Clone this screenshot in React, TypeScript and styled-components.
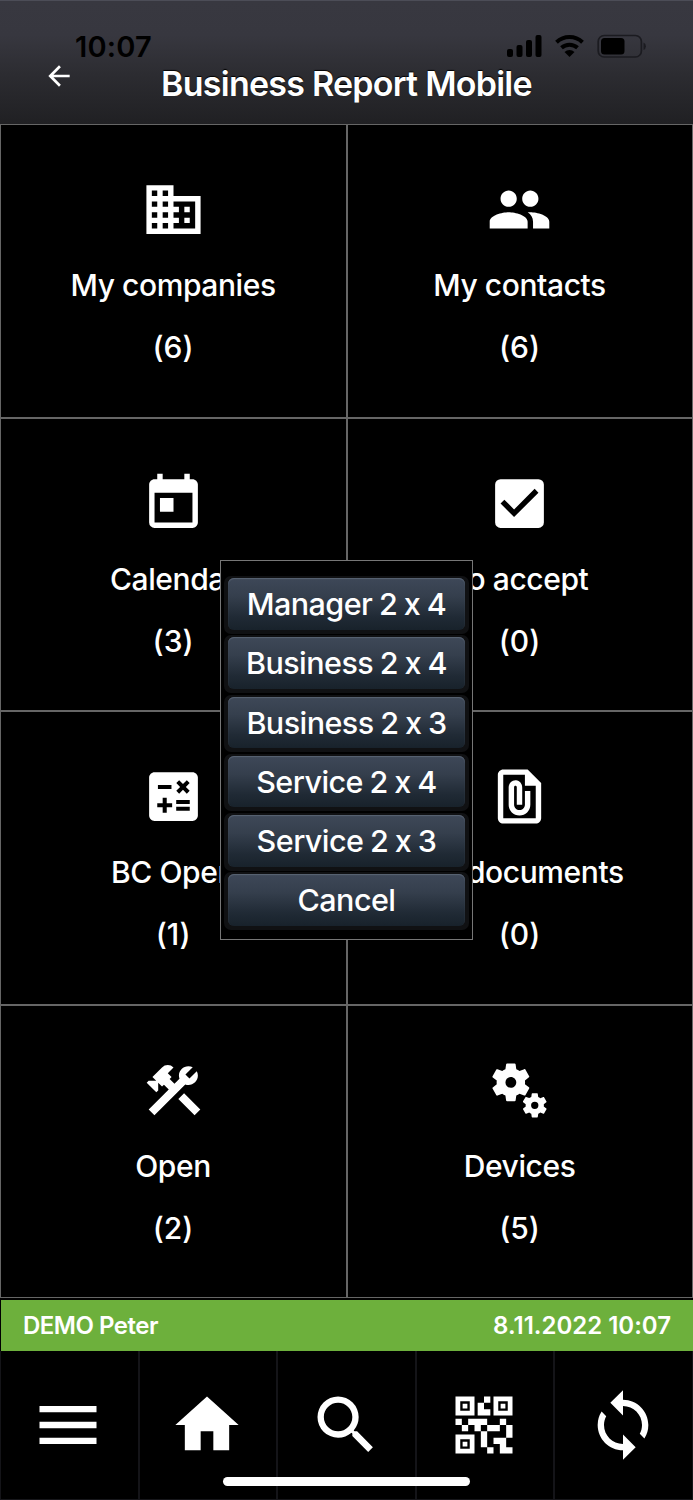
import React from "react";
import styled, { createGlobalStyle } from "styled-components";
import type { IconType } from "react-icons";
import {
  MdDomain,
  MdPeople,
  MdToday,
  MdCheckBox,
  MdCalculate,
  MdFilePresent,
  MdConstruction,
  MdMiscellaneousServices,
  MdMenu,
  MdHome,
  MdSearch,
  MdQrCode2,
  MdSync,
  MdArrowBack,
} from "react-icons/md";

const GlobalStyle = createGlobalStyle`
  * { box-sizing: border-box; }
  body { margin: 0; background: #000; }
  button { font: inherit; color: inherit; border: 0; background: none; padding: 0; }
`;

const Screen = styled.main`
  position: relative;
  display: flex;
  flex-direction: column;
  width: 693px;
  height: 1500px;
  overflow: hidden;
  background: #000;
  color: #fff;
  font-family: Inter, "Liberation Sans", sans-serif;
  font-feature-settings: "calt" 0;
`;

const Header = styled.header`
  flex: none;
  height: 124px;
  border-top: 1px solid #4c4d57;
  background: linear-gradient(#383840 0%, #37373f 28%, #2c2c31 60%, #202023 100%);
`;

const StatusBar = styled.div`
  display: flex;
  justify-content: space-between;
  align-items: center;
  height: 28px;
  margin-top: 31px;
  padding: 0 46px 0 75px;
  color: #000;
`;

const Clock = styled.span`
  padding-top: 1px;
  font-size: 29px;
  font-weight: 600;
  line-height: 28px;
  letter-spacing: 0.2px;
`;

const TitleRow = styled.div`
  display: grid;
  grid-template-columns: 118px 1fr 118px;
  height: 50px;
`;

const BackButton = styled.button`
  display: flex;
  justify-content: center;
  height: 32px;
`;

const Title = styled.h1`
  margin: 0;
  font-size: 34px;
  font-weight: 600;
  line-height: 48px;
  letter-spacing: -0.75px;
  text-align: center;
  white-space: nowrap;
  text-shadow: 0 -1px 1px #000;
`;

const TileGrid = styled.section`
  flex: none;
  display: grid;
  grid-template-columns: 1fr 1fr;
  grid-template-rows: repeat(4, 1fr);
  height: 1174px;
`;

const Tile = styled.div`
  display: flex;
  flex-direction: column;
  align-items: center;
  padding: 52px 0.4px 0 0;
  border: 1px solid #666;
`;

const TileText = styled.span`
  font-size: 30px;
  font-weight: 500;
  line-height: 62px;
  white-space: nowrap;
`;

const TileLabel = styled(TileText)`
  margin-top: 12px;
  letter-spacing: -0.42px;
`;

const InfoBar = styled.div`
  flex: none;
  display: flex;
  justify-content: space-between;
  height: 51px;
  margin: 2px 0 0 1px;
  padding: 0 22px;
  background: #6db03c;
  font-size: 24px;
  font-weight: 600;
  line-height: 52px;
`;

const UserName = styled.span`
  letter-spacing: -0.5px;
`;

const Timestamp = styled.span`
  letter-spacing: 0;
`;

const NavBar = styled.nav`
  display: grid;
  grid-template-columns: repeat(5, 1fr);
  height: 149px;
  border-bottom: 1px solid #17171b;
`;

const NavItem = styled.button`
  display: flex;
  justify-content: center;
  padding: 36px 1.8px 0 0;
  border: solid #141418;
  border-width: 0 1px;
`;

const HomeIndicator = styled.div`
  position: absolute;
  left: 223px;
  bottom: 14px;
  width: 247px;
  height: 9px;
  border-radius: 5px;
  background: #fff;
`;

const Dialog = styled.div`
  position: absolute;
  top: 560px;
  left: 220px;
  display: flex;
  flex-direction: column;
  gap: 1.75px;
  width: 253px;
  height: 380px;
  padding: 15px 3px;
  border: 1px solid #777;
  background: #000;
`;

const ButtonFrame = styled.div`
  flex: none;
  height: 57.5px;
  padding: 2px 4px 4px;
  border-radius: 7px;
  background: #101113;
`;

const DialogButton = styled.button`
  display: block;
  width: 100%;
  height: 51.5px;
  border-radius: 6px;
  background: linear-gradient(#3e4858 0%, #353f4d 35%, #202a35 75%, #18222b 100%);
  box-shadow: inset 0 1px 1px #596474;
  font-size: 30.5px;
  font-weight: 500;
  line-height: 52px;
  letter-spacing: -0.55px;
  word-spacing: -1px;
  text-align: center;
  white-space: nowrap;
`;

const tiles: { icon: IconType; label: string; count: number }[] = [
  { icon: MdDomain, label: "My companies", count: 6 },
  { icon: MdPeople, label: "My contacts", count: 6 },
  { icon: MdToday, label: "Calendar", count: 3 },
  { icon: MdCheckBox, label: "To accept", count: 0 },
  { icon: MdCalculate, label: "BC Open", count: 1 },
  { icon: MdFilePresent, label: "My documents", count: 0 },
  { icon: MdConstruction, label: "Open", count: 2 },
  { icon: MdMiscellaneousServices, label: "Devices", count: 5 },
];

const layouts = [
  "Manager 2 x 4",
  "Business 2 x 4",
  "Business 2 x 3",
  "Service 2 x 4",
  "Service 2 x 3",
  "Cancel",
];

const navIcons: IconType[] = [MdMenu, MdHome, MdSearch, MdQrCode2, MdSync];

const StatusIcons = () => (
  <svg width="140" height="26" viewBox="0 0 140 26">
    <rect x="0" y="16" width="6" height="8" rx="2" />
    <rect x="9.5" y="12" width="6" height="12" rx="2" />
    <rect x="19" y="7" width="6" height="17" rx="2" />
    <rect x="28.5" y="2" width="6" height="22" rx="2" />
    <g fill="none" stroke="#000" strokeWidth="4">
      <path d="M49.5 9.2a19 19 0 0 1 26 0" />
      <path d="M54.5 14.8a12 12 0 0 1 16 0" />
    </g>
    <path d="M62.5 24l-5-5a7.5 7.5 0 0 1 10 0z" />
    <rect x="91.2" y="2.5" width="43.2" height="21.5" rx="6" fill="none" stroke="#1b1b20" strokeWidth="1.7" />
    <rect x="94" y="5" width="23.5" height="16.5" rx="3.5" />
    <path d="M136.5 9.5q2.4 1.2 2.4 3.8t-2.4 3.8z" fill="#1b1b20" />
  </svg>
);

export default function App() {
  return (
    <>
      <GlobalStyle />
      <Screen>
        <Header>
          <StatusBar>
            <Clock>10:07</Clock>
            <StatusIcons />
          </StatusBar>
          <TitleRow>
            <BackButton aria-label="Back">
              <MdArrowBack size={32} />
            </BackButton>
            <Title>Business Report Mobile</Title>
          </TitleRow>
        </Header>
        <TileGrid>
          {tiles.map(({ icon: Icon, label, count }) => (
            <Tile key={label}>
              <Icon size={65} />
              <TileLabel>{label}</TileLabel>
              <TileText>({count})</TileText>
            </Tile>
          ))}
        </TileGrid>
        <InfoBar>
          <UserName>DEMO Peter</UserName>
          <Timestamp>8.11.2022 10:07</Timestamp>
        </InfoBar>
        <NavBar>
          {navIcons.map((Icon, i) => (
            <NavItem key={i}>
              <Icon size={76} />
            </NavItem>
          ))}
        </NavBar>
        <HomeIndicator />
        <Dialog role="dialog">
          {layouts.map((name) => (
            <ButtonFrame key={name}>
              <DialogButton>{name}</DialogButton>
            </ButtonFrame>
          ))}
        </Dialog>
      </Screen>
    </>
  );
}
